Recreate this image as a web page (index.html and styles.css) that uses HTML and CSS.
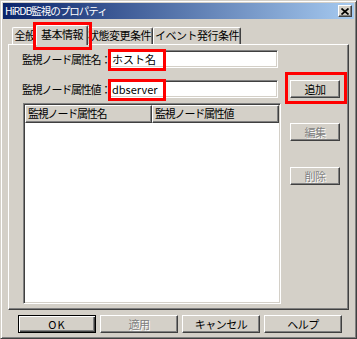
FILE: index.html
```html
<!DOCTYPE html>
<html lang="ja">
<head>
  <meta charset="UTF-8">
  <title>HiRDB監視のプロパティ</title>
  <link rel="stylesheet" href="styles.css">
</head>
<body>
  <div class="window">
    <div class="titlebar">
      <span class="title">HiRDB監視のプロパティ</span>
      <span class="close">
        <svg width="8" height="7" viewBox="0 0 8 7"><path d="M0.5 0.5 L7.5 6.5 M7.5 0.5 L0.5 6.5" stroke="#000" stroke-width="1.7" fill="none"/></svg>
      </span>
    </div>

    <div class="tabs">
      <div class="tab tab-general">全般</div>
      <div class="tab tab-basic active">基本情報<span class="mark mark-tab"></span></div>
      <div class="tab tab-state">状態変更条件</div>
      <div class="tab tab-event">イベント発行条件</div>
    </div>

    <div class="panel">
      <div class="fields">
        <div class="row">
          <span class="label">監視ノード属性名：</span>
          <div class="input">ホスト名<span class="mark mark-input"></span></div>
        </div>
        <div class="row row-second">
          <span class="label">監視ノード属性値：</span>
          <div class="input">dbserver<span class="mark mark-input"></span></div>
        </div>
        <div class="list">
          <div class="list-head">
            <div class="col">監視ノード属性名</div>
            <div class="col">監視ノード属性値</div>
          </div>
        </div>
      </div>
      <div class="side">
        <button class="btn btn-add">追加<span class="mark mark-add"></span></button>
        <button class="btn btn-edit disabled">編集</button>
        <button class="btn btn-delete disabled">削除</button>
      </div>
    </div>

    <div class="actions">
      <button class="btn btn-wide default">OK</button>
      <button class="btn btn-wide disabled">適用</button>
      <button class="btn btn-wide">キャンセル</button>
      <button class="btn btn-wide">ヘルプ</button>
    </div>
  </div>
</body>
</html>
```

FILE: styles.css
```css
body {
  margin: 0;
  font-family: "Noto Sans CJK JP", sans-serif;
  font-size: 11px;
  color: #000;
  letter-spacing: -0.5px;
}
.window {
  width: 357px;
  height: 339px;
  box-sizing: border-box;
  background: #d4d0c8;
  border: 1px solid;
  border-color: #d4d0c8 #404040 #404040 #d4d0c8;
  box-shadow: inset 1px 1px #fff, inset -1px -1px #808080;
  padding: 2px;
}
.titlebar {
  height: 16px;
  display: flex;
  align-items: center;
  justify-content: space-between;
  background: linear-gradient(to right, #0a246a, #a6caf0);
  color: #fff;
  padding: 0 2px 0 2px;
}
.title {
  font-size: 10.5px;
  letter-spacing: -1px;
  line-height: 16px;
}
.close {
  width: 14px;
  height: 12px;
  box-sizing: border-box;
  background: #d4d0c8;
  border: 1px solid;
  border-color: #fff #404040 #404040 #fff;
  box-shadow: inset -1px -1px #808080;
  display: flex;
  align-items: center;
  justify-content: center;
}
.close svg { display: block; }

/* tabs */
.tabs {
  display: flex;
  align-items: flex-end;
  height: 19px;
  margin-top: 6px;
  padding-left: 9px;
  position: relative;
  z-index: 1;
}
.tab {
  height: 17px;
  box-sizing: border-box;
  background: #d4d0c8;
  border: 1px solid;
  border-color: #fff #404040 transparent #fff;
  border-bottom: none;
  border-radius: 2px 2px 0 0;
  box-shadow: inset -1px 0 #808080;
  text-align: center;
  line-height: 15px;
  white-space: nowrap;
  position: relative;
}
.tab-general { width: 26px; }
.tab-basic { width: 48px; }
.tab-state { width: 67px; }
.tab-event { width: 88px; }
.tab.active {
  width: 52px;
  height: 20px;
  margin: 0 -2px -1px;
  line-height: 17px;
  z-index: 2;
}

/* red highlight frames */
.mark {
  position: absolute;
  box-sizing: border-box;
  border: 3px solid #ff0000;
  pointer-events: none;
}
.mark-tab {
  left: -4px;
  top: -4px;
  width: 59px;
  height: 28px;
}
.mark-input {
  left: -1px;
  top: -2px;
  width: 58px;
  height: 22px;
}
.mark-add {
  left: -6px;
  top: -9px;
  width: 62px;
  height: 32px;
}

/* panel */
.panel {
  display: flex;
  height: 266px;
  margin: 0 5px;
  box-sizing: border-box;
  border: 1px solid;
  border-color: #fff #404040 #404040 #fff;
  box-shadow: inset -1px -1px #808080;
  padding: 5px 0 0 13px;
}
.fields { width: 259px; }
.row {
  display: flex;
  align-items: center;
  height: 18px;
}
.row-second { margin-top: 12px; }
.label {
  width: 86px;
  flex-shrink: 0;
  white-space: nowrap;
  letter-spacing: -1.2px;
}
.input {
  position: relative;
  width: 170px;
  height: 18px;
  box-sizing: border-box;
  background: #fff;
  border: 1px solid;
  border-color: #808080 #fff #fff #808080;
  box-shadow: inset 1px 1px #404040, inset -1px -1px #d4d0c8;
  padding-left: 3px;
  line-height: 16px;
  letter-spacing: 0;
}
.list {
  width: 258px;
  height: 201px;
  margin: 5px 0 0 1px;
  box-sizing: border-box;
  background: #fff;
  border: 1px solid;
  border-color: #808080 #fff #fff #808080;
  box-shadow: inset 1px 1px #404040, inset -1px -1px #d4d0c8;
  padding: 1px;
}
.list-head { display: flex; }
.col {
  width: 127px;
  height: 18px;
  box-sizing: border-box;
  background: #d4d0c8;
  border: 1px solid;
  border-color: #fff #404040 #404040 #fff;
  box-shadow: inset -1px -1px #808080;
  padding-left: 2px;
  line-height: 15px;
  letter-spacing: -1.2px;
  white-space: nowrap;
}

/* buttons */
.btn {
  position: relative;
  display: block;
  width: 50px;
  height: 18px;
  padding: 0;
  box-sizing: border-box;
  background: #d4d0c8;
  border: 1px solid;
  border-color: #fff #404040 #404040 #fff;
  border-radius: 0;
  box-shadow: inset -1px -1px #808080;
  font: inherit;
  color: #000;
  letter-spacing: -0.5px;
  line-height: 15px;
  text-align: center;
}
.btn.disabled {
  color: #808080;
  text-shadow: 1px 1px #fff;
}
.side {
  width: 50px;
  margin-left: 9px;
}
.btn-add { margin-top: 30px; }
.btn-edit { margin-top: 25px; }
.btn-delete { margin-top: 26px; }

.actions {
  display: flex;
  gap: 4px;
  margin: 5px 0 0 15px;
}
.btn-wide { width: 78px; }
.btn.default {
  border-color: #000;
  box-shadow: inset 1px 1px #fff, inset -1px -1px #404040, inset -2px -2px #808080;
  letter-spacing: 1px;
}
```
